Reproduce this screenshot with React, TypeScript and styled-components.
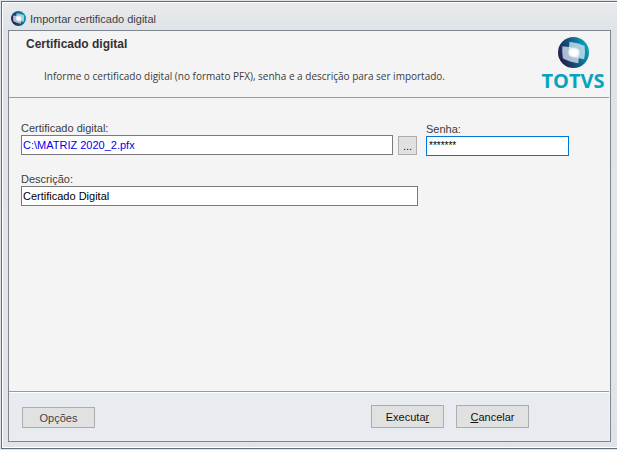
import React from 'react';
import styled, { createGlobalStyle, css } from 'styled-components';

const GlobalStyle = createGlobalStyle`
  *, *::before, *::after { box-sizing: border-box; }
  html, body, #root { height: 100%; }
  body {
    margin: 0;
    background: #dfe4ea;
    color: #3c3c3c;
    font: 11px/14px "Liberation Sans", Arial, sans-serif;
  }
`;

const Desktop = styled.div`
  min-height: 100%;
  display: flex;
  padding: 1px 0 1px 1px;
`;

const Dialog = styled.section`
  flex: 1;
  display: flex;
  flex-direction: column;
  padding: 0 6px 6px;
  border: 1px solid #626d7a;
  border-right: 0;
  box-shadow: inset 1px 1px #fff, inset 0 -1px #fff;
  background: linear-gradient(#e9ebed, #dfe3e7 28px, #e1e5e9 50%, #e2e3ea);
`;

const TitleBar = styled.header`
  display: flex;
  align-items: center;
  gap: 4px;
  height: 28px;
  padding: 5px 3px 0;
  color: #3a3f46;
`;

const Title = styled.h1`
  margin: 0;
  font: inherit;
`;

const Panel = styled.form`
  flex: 1;
  display: flex;
  flex-direction: column;
  border: 1px solid #7e8790;
  background: #f4f4f4;
`;

const Intro = styled.div`
  display: flex;
  justify-content: space-between;
  height: 67px;
  margin-right: 1px;
  border-bottom: 1px solid #979b9e;
`;

const IntroText = styled.div`
  padding: 6px 0 0 17px;
`;

const Heading = styled.h2`
  margin: 0 0 17px;
  font-size: 12px;
  line-height: 15px;
  color: #343034;
`;

const Hint = styled.p`
  margin: 0 0 0 18px;
  font: 10px/14px "Open Sans", sans-serif;
`;

const Brand = styled.div`
  display: flex;
  flex-direction: column;
  align-items: center;
  width: 62px;
  margin-right: 5px;
  padding-top: 6px;
`;

const BrandName = styled.span`
  font: 700 20px/26px "Open Sans", sans-serif;
  color: #08a3bf;
`;

const Fields = styled.div`
  flex: 1;
  padding: 23px 41px 0 12px;
`;

const FieldRow = styled.div`
  display: flex;
  align-items: flex-end;
  margin-bottom: 16px;
`;

const Field = styled.label<{ $size: 'fill' | 'secret' | 'long' }>`
  display: flex;
  flex-direction: column;
  ${({ $size }) => $size === 'fill' && css`flex: 1; padding-bottom: 1px;`}
  ${({ $size }) => $size === 'secret' && css`width: 143px;`}
  ${({ $size }) => $size === 'long' && css`width: 397px;`}
`;

const TextInput = styled.input<{ $tone?: 'file' | 'secret' }>`
  width: 100%;
  height: 20px;
  padding: 0 1px;
  border: 1px solid #7a7a7a;
  border-radius: 0;
  outline: 0;
  background: #fff;
  color: #000;
  font: inherit;
  ${({ $tone }) => $tone === 'file' && css`color: #0000f0;`}
  ${({ $tone }) => $tone === 'secret' && css`
    padding: 0 2px 2px;
    border-color: #0078d7;
    font-size: 10px;
  `}
`;

const Button = styled.button<{ $kind?: 'browse' | 'muted' }>`
  width: 73px;
  height: 23px;
  padding: 0;
  border: 1px solid #adadad;
  border-radius: 0;
  background: #e1e1e1;
  color: #111;
  font: inherit;
  ${({ $kind }) => $kind === 'muted' && css`
    height: 21px;
    color: #444;
  `}
  ${({ $kind }) => $kind === 'browse' && css`
    width: 19px;
    height: 19px;
    margin: 0 9px 1px 5px;
  `}
`;

const Footer = styled.footer`
  display: flex;
  align-items: flex-end;
  gap: 12px;
  height: 50px;
  margin-right: 1px;
  padding: 0 80px 13px 13px;
  border-top: 1px solid #979b9e;
  box-shadow: inset 0 1px #fff;
  background: #e8ebf0;
`;

const Spacer = styled.span`
  flex: 1;
`;

function Orb({ size, id }: { size: number; id: string }) {
  return (
    <svg width={size} height={size} viewBox="0 0 32 32" aria-hidden="true">
      <defs>
        <linearGradient id={`${id}-ball`} x1="0" y1="0.7" x2="1" y2="0.3">
          <stop offset="0" stopColor="#241a4c" />
          <stop offset="0.45" stopColor="#155078" />
          <stop offset="1" stopColor="#08a6c0" />
        </linearGradient>
        <radialGradient id={`${id}-shine`}>
          <stop offset="0.5" stopColor="#fff" />
          <stop offset="1" stopColor="#fff" stopOpacity="0" />
        </radialGradient>
      </defs>
      <circle cx="16" cy="16" r="16" fill={`url(#${id}-ball)`} />
      <path d="M12 5Q20 6 27.500 9Q28.500 16 27 23Q19 22 11.500 19Q10.500 12 12 5Z" fill="#d9ebf5" opacity="0.75" />
      <path d="M4.500 9.500Q13 10 21 13Q22 20 21 27Q12 26 5 22Q4 16 4.500 9.500Z" fill="#e3e8f5" opacity="0.75" />
      <ellipse cx="16.500" cy="16" rx="7" ry="6" fill={`url(#${id}-shine)`} />
    </svg>
  );
}

export default function App() {
  return (
    <>
      <GlobalStyle />
      <Desktop>
        <Dialog role="dialog" aria-labelledby="dialog-title">
          <TitleBar>
            <Orb size={15} id="title" />
            <Title id="dialog-title">Importar certificado digital</Title>
          </TitleBar>
          <Panel onSubmit={(e) => e.preventDefault()}>
            <Intro>
              <IntroText>
                <Heading>Certificado digital</Heading>
                <Hint>
                  Informe o certificado digital (no formato PFX), senha e a descrição para ser importado.
                </Hint>
              </IntroText>
              <Brand>
                <Orb size={31} id="brand" />
                <BrandName>TOTVS</BrandName>
              </Brand>
            </Intro>
            <Fields>
              <FieldRow>
                <Field $size="fill">
                  Certificado digital:
                  <TextInput $tone="file" defaultValue="C:\MATRIZ 2020_2.pfx" />
                </Field>
                <Button type="button" $kind="browse" aria-label="Procurar">...</Button>
                <Field $size="secret">
                  Senha:
                  <TextInput $tone="secret" defaultValue="*******" autoComplete="off" />
                </Field>
              </FieldRow>
              <FieldRow>
                <Field $size="long">
                  Descrição:
                  <TextInput defaultValue="Certificado Digital" />
                </Field>
              </FieldRow>
            </Fields>
            <Footer>
              <Button type="button" $kind="muted">Opções</Button>
              <Spacer />
              <Button type="submit">Executa<u>r</u></Button>
              <Button type="button"><u>C</u>ancelar</Button>
            </Footer>
          </Panel>
        </Dialog>
      </Desktop>
    </>
  );
}
